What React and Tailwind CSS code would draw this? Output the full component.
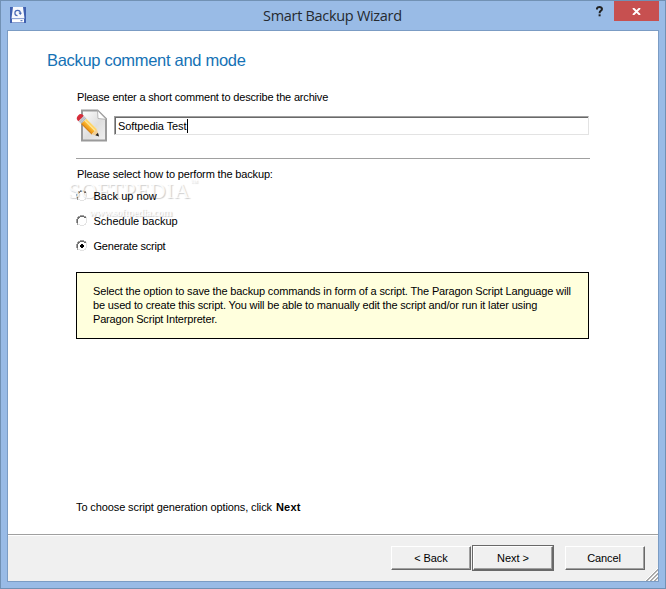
import React, { useState } from "react";

const modes = [
  { id: "now", label: "Back up now", spacing: "tracking-[0.03px]" },
  { id: "schedule", label: "Schedule backup", spacing: "tracking-[-0.02px]" },
  { id: "script", label: "Generate script", spacing: "tracking-[-0.22px]" },
];

const AppIcon = () => (
  <svg width="16" height="16" viewBox="0 0 16 16" className="block">
    <rect width="16" height="16" fill="#3f60b0" />
    <path d="M3 0h10l1.5 11.5H1.5z" fill="#f6f8fd" />
    <path d="M2 12h12v3.4H2z" fill="#fff" />
    <path d="M2 11.7h12" stroke="#8ea3d4" strokeWidth="0.8" />
    <path d="M10.5 13.7h2" stroke="#3f60b0" strokeWidth="1" />
    <path
      d="M7.5 8.7A2.7 2.7 0 1 1 10.3 6"
      fill="none"
      stroke="#4767b4"
      strokeWidth="1.2"
    />
    <path d="M8.4 5.7h3.7l-1.8 2.4z" fill="#4767b4" />
  </svg>
);

const NoteIcon = () => (
  <svg width="32" height="34" viewBox="0 0 32 34" className="block">
    <defs>
      <linearGradient id="paper" x1="0" y1="0" x2="1" y2="1">
        <stop offset="0" stopColor="#fff" />
        <stop offset="0.55" stopColor="#dedede" />
        <stop offset="1" stopColor="#f1f1f1" />
      </linearGradient>
      <linearGradient id="wood" x1="0" y1="1" x2="0" y2="0">
        <stop offset="0" stopColor="#e58a10" />
        <stop offset="0.5" stopColor="#fbb62d" />
        <stop offset="1" stopColor="#ffdf80" />
      </linearGradient>
    </defs>
    <path
      d="M6 1.5h15.5l8.5 8.5v21.5H6z"
      fill="url(#paper)"
      stroke="#9a9a9a"
      strokeWidth="2"
    />
    <path d="M21.5 1.5l.5 8 8 .8z" fill="#fff" stroke="#aaa" strokeWidth="0.8" />
    <g transform="translate(3.4 7.8) rotate(45)">
      <path d="M6 -3.7h15v7.4H6z" fill="url(#wood)" />
      <path d="M6 -1.3h15" stroke="#ffe79b" strokeWidth="1.3" />
      <path d="M6 3.5h15" stroke="#c87914" strokeWidth="0.8" />
      <path d="M2.4 -3.8h3.8v7.6H2.4z" fill="#ccd1d8" />
      <path d="M3.8 -3.8v7.6M5.4 -3.8v7.6" stroke="#9298a0" strokeWidth="0.5" />
      <path d="M2.4 -3.8H1Q-1.8 -3.4 -1.8 0T1 3.8h1.4z" fill="#d62d3a" />
      <path d="M21 -3.7L27.6 0 21 3.7z" fill="#f3cf94" />
      <path d="M24.4 -1.8L27.8 0l-3.4 1.8z" fill="#222" />
    </g>
  </svg>
);

const Radio = ({ checked }) => (
  <svg
    width="12"
    height="12"
    viewBox="0 0 12 12"
    shapeRendering="crispEdges"
    className="block">
    <path
      d="M4 0h4v1H4zM2 1h2v1H2zM8 1h2v1H8zM1 2h1v2H1zM0 4h1v4H0zM1 8h1v2H1z"
      fill="#a0a0a0"
    />
    <path
      d="M4 1h4v1H4zM2 2h2v1H2zM8 2h2v1H8zM2 3h1v1H2zM1 4h1v4H1z"
      fill="#696969"
    />
    <path
      d="M10 2h1v2h-1zM10 4h1v4h-1zM10 8h-1v2h1zM8 9h1v1H8zM2 9h2v1H2zM4 10h4v1H4z"
      fill="#e3e3e3"
    />
    {checked && <path d="M5 4h2v1h1v2H7v1H5V7H4V5h1z" fill="#000" />}
  </svg>
);

const bevel =
  "flex h-6 w-20 items-center justify-center border border-t-white border-l-white border-r-[#696969] border-b-[#696969] bg-[#f0f0f0] shadow-[inset_-1px_-1px_0_#a0a0a0]";

const App = () => {
  const [mode, setMode] = useState("script");

  return (
    <div className="flex h-[589px] w-[666px] flex-col overflow-hidden border border-[#7191b4] bg-[#99bbe6] px-1.5 pb-1.5 font-['Liberation_Sans',Arial,sans-serif] text-[11px] leading-[14px] text-black">
      <header className="flex h-[29px] shrink-0 items-start">
        <div className="ml-[3px] mt-[6px] w-[253px]">
          <AppIcon />
        </div>
        <h1 className="mt-[5px] w-[333px] whitespace-nowrap font-['Open_Sans',sans-serif] text-[14.5px] leading-5 tracking-[-0.3px] text-[#252a30]">
          Smart Backup Wizard
        </h1>
        <svg width="8" height="12" viewBox="0 0 8 12" className="mt-[5px] block">
          <path
            d="M1 3.4V2.3Q1.4 1 3.5 1T6 3Q6 4.1 4.7 4.9Q3.6 5.6 3.6 7.2"
            fill="none"
            stroke="#222"
            strokeWidth="2"
          />
          <path d="M2.6 8.3h2v2h-2z" fill="#222" />
        </svg>
        <button className="ml-[10px] flex h-5 w-[45px] shrink-0 items-center justify-center bg-[#c75050]">
          <svg width="9" height="7" viewBox="0 0 9 7">
            <path d="M1 0l7 7M8 0L1 7" stroke="#fff" strokeWidth="1.9" />
          </svg>
        </button>
      </header>

      <div className="flex h-[552px] w-[652px] shrink-0 flex-col border border-[#7b9cc4] bg-white">
        <main className="flex h-[503px] shrink-0 flex-col pl-[68px]">
          <h2 className="-ml-[29px] mt-[17px] whitespace-nowrap text-[16.5px] leading-6 tracking-[-0.3px] text-[#1572b5]">
            Backup comment and mode
          </h2>
          <p className="ml-px mt-[18px] whitespace-nowrap tracking-[-0.18px]">
            Please enter a short comment to describe the archive
          </p>
          <div className="mt-[5px] flex h-[34px]">
            <NoteIcon />
            <div className="ml-[6px] mt-[7px] flex h-[19px] w-[475px] items-center border border-t-[#a0a0a0] border-l-[#a0a0a0] border-r-[#e3e3e3] border-b-[#e3e3e3] pl-[3px] shadow-[inset_1px_1px_0_#696969]">
              <span className="tracking-[-0.07px]">Softpedia Test</span>
              <span className="h-[14px] w-px bg-black" />
            </div>
          </div>
          <div className="mt-[15px] h-px w-[514px] shrink-0 bg-[#a0a0a0]" />
          <p className="ml-px mt-[8px] whitespace-nowrap tracking-[-0.15px]">
            Please select how to perform the backup:
          </p>
          <div className="relative mt-[8px] flex flex-col gap-[11px]">
            {modes.map((item) => (
              <label
                key={item.id}
                onClick={() => setMode(item.id)}
                className="flex h-[14px] items-center">
                <Radio checked={mode === item.id} />
                <span
                  className={`relative z-10 ml-[5.5px] whitespace-nowrap ${item.spacing}`}>
                  {item.label}
                </span>
              </label>
            ))}
            <div className="pointer-events-none absolute -left-[8px] -top-[10px] whitespace-nowrap font-['Liberation_Serif',serif] text-white/85 [text-shadow:1px_1px_1px_rgba(0,0,0,0.2)]">
              <div className="flex items-start">
                <span className="text-[22px] leading-6 tracking-[0.4px]">
                  SOFTPEDIA
                </span>
                <span className="text-[8px] leading-2">™</span>
              </div>
              <div className="ml-[21px] mt-[3px] text-[11px] font-bold leading-3 tracking-[-0.5px]">
                www.softpedia.com
              </div>
            </div>
          </div>
          <div className="mt-[19px] h-[67px] w-[513px] shrink-0 whitespace-nowrap border border-black bg-[#ffffdd] pl-[16px] pt-[11px]">
            <p className="tracking-[-0.15px]">
              Select the option to save the backup commands in form of a script. The Paragon Script Language will
            </p>
            <p className="tracking-[-0.155px]">
              be used to create this script. You will be able to manually edit the script and/or run it later using
            </p>
            <p className="tracking-[-0.18px]">Paragon Script Interpreter.</p>
          </div>
          <p className="mt-[161px] flex whitespace-nowrap">
            <span className="tracking-[-0.11px]">
              To choose script generation options, click
            </span>
            <b className="ml-[4px] tracking-[0.2px]">Next</b>
          </p>
        </main>

        <footer className="relative flex h-[47px] shrink-0 items-start border-t border-[#a0a0a0] bg-[#f0f0f0] pl-[383px] pt-[10px] shadow-[inset_0_1px_0_#fff]">
          <button className={`mt-px ${bevel}`}>
            <span className="tracking-[-0.1px]">&lt; Back</span>
          </button>
          <div className="ml-px border border-[#696969]">
            <button className={bevel}>
              <span>Next &gt;</span>
            </button>
          </div>
          <button className={`ml-[11px] mt-px ${bevel}`}>
            <span className="mr-[2px] tracking-[-0.1px]">Cancel</span>
          </button>
          <svg
            width="13"
            height="13"
            viewBox="0 0 13 13"
            className="absolute bottom-0 right-0">
            <path
              d="M0 13L13 0M4 13l9-9M8 13l5-5"
              stroke="#fff"
              strokeWidth="1"
            />
            <path
              d="M1 13L13 1M2 13L13 2M5 13l8-8M6 13l7-7M9 13l4-4M10 13l3-3"
              stroke="#a0a0a0"
              strokeWidth="0.9"
            />
          </svg>
        </footer>
      </div>
    </div>
  );
};

export default App;
